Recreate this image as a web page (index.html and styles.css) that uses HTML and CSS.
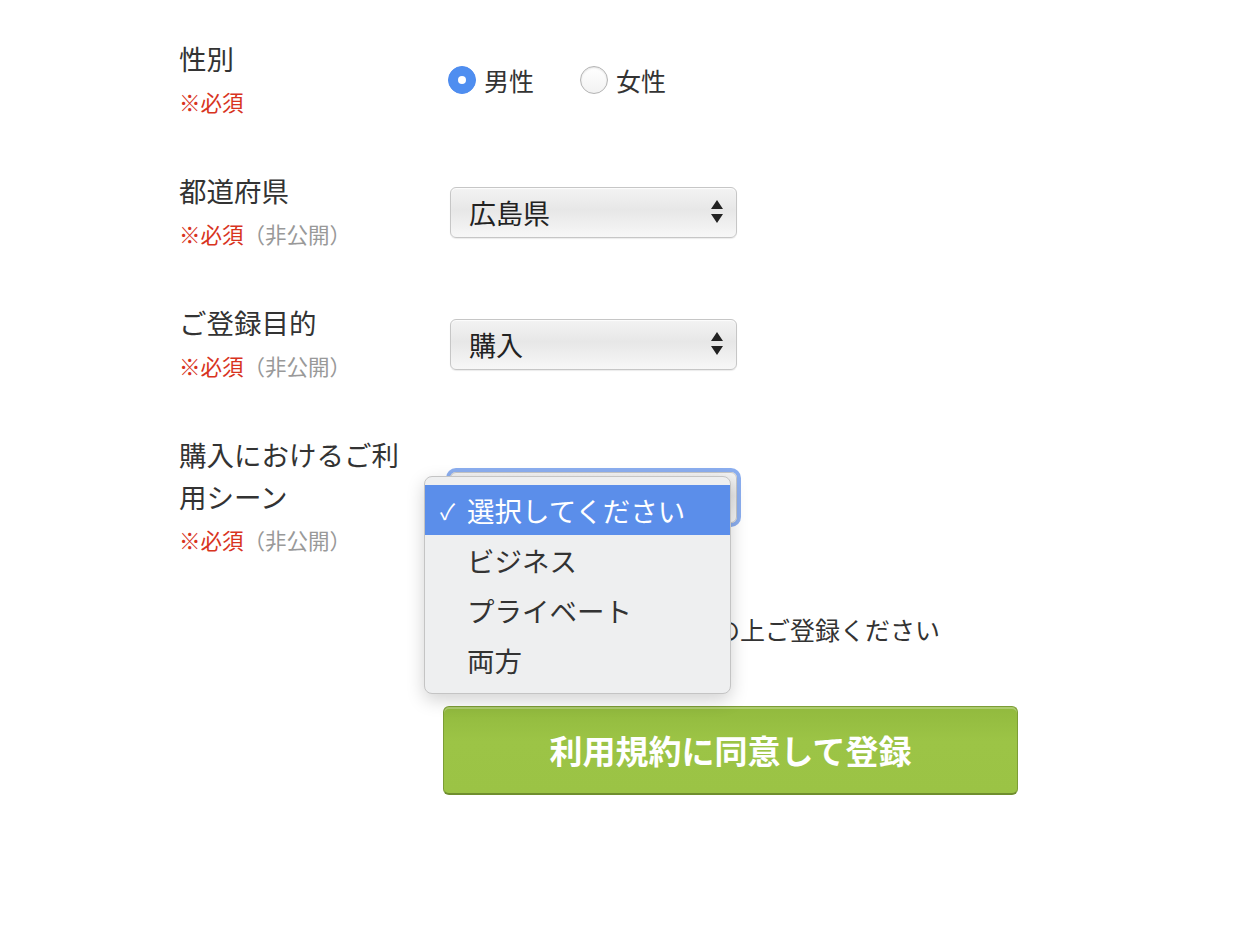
FILE: index.html
```html
<!DOCTYPE html>
<html>
<head>
    <meta charset="utf-8">
    <title>会員登録</title>
    <link rel="stylesheet" href="styles.css">
</head>
<body>
    <div class="form">

        <div class="row">
            <div class="label">
                <div class="title">性別</div>
                <div class="note"><span class="req">※必須</span></div>
            </div>
            <div class="field">
                <div class="radios">
                    <label class="radio"><span class="dot on"></span>男性</label>
                    <label class="radio"><span class="dot"></span>女性</label>
                </div>
            </div>
        </div>

        <div class="row">
            <div class="label">
                <div class="title">都道府県</div>
                <div class="note"><span class="req">※必須</span><span class="private">（非公開）</span></div>
            </div>
            <div class="field">
                <div class="select">
                    <span>広島県</span>
                    <svg class="arrows" width="12" height="26" viewBox="0 0 12 26"><path d="M6 1 L12 10 L0 10 Z M0 15 L12 15 L6 24 Z" fill="#222"/></svg>
                </div>
            </div>
        </div>

        <div class="row">
            <div class="label">
                <div class="title">ご登録目的</div>
                <div class="note"><span class="req">※必須</span><span class="private">（非公開）</span></div>
            </div>
            <div class="field">
                <div class="select">
                    <span>購入</span>
                    <svg class="arrows" width="12" height="26" viewBox="0 0 12 26"><path d="M6 1 L12 10 L0 10 Z M0 15 L12 15 L6 24 Z" fill="#222"/></svg>
                </div>
            </div>
        </div>

        <div class="row row-tall">
            <div class="label">
                <div class="title narrow">購入におけるご利用シーン</div>
                <div class="note"><span class="req">※必須</span><span class="private">（非公開）</span></div>
            </div>
            <div class="field">
                <div class="select focused">
                    <span>選択してください</span>
                </div>
                <!-- open option list -->
                <ul class="menu">
                    <li class="active"><span class="check">✓</span>選択してください</li>
                    <li>ビジネス</li>
                    <li>プライベート</li>
                    <li>両方</li>
                </ul>
            </div>
        </div>

        <div class="agree">
            <p>利用規約をご確認の上ご登録ください</p>
            <button class="submit">利用規約に同意して登録</button>
        </div>

    </div>
</body>
</html>
```

FILE: styles.css
```css
body {
    margin: 0;
    background: #fff;
    font-family: "Noto Sans CJK JP", "Noto Sans", sans-serif;
    color: #333;
}

.form {
    padding: 37px 0 0 179px;
}

.row {
    display: flex;
    align-items: center;
    margin-bottom: 44px;
}

.label {
    width: 264px;
    flex-shrink: 0;
}

.title {
    font-size: 27.5px;
    line-height: 42px;
}

.title.narrow {
    width: 232px;
}

.note {
    font-size: 21.5px;
    line-height: 46px;
}

.req {
    color: #d8341e;
}

.private {
    color: #999;
}

.field {
    position: relative;
    margin-top: -2px;
}

/* radio buttons */
.radios {
    display: flex;
    gap: 46px;
    margin-left: 5px;
}

.radio {
    display: flex;
    align-items: center;
    gap: 8px;
    font-size: 25px;
}

.dot {
    width: 26px;
    height: 26px;
    border-radius: 50%;
    border: 1px solid #b4b4b4;
    background: linear-gradient(#fff, #f2f2f2);
    box-shadow: inset 0 1px 2px rgba(0, 0, 0, 0.12);
    position: relative;
}

.dot.on {
    border-color: #4d8bef;
    background: #4f8ef0;
    box-shadow: none;
}

.dot.on::after {
    content: "";
    position: absolute;
    left: 9px;
    top: 9px;
    width: 8px;
    height: 8px;
    border-radius: 50%;
    background: #fff;
}

/* select look */
.select {
    margin-left: 7px;
    width: 287px;
    height: 51px;
    box-sizing: border-box;
    border: 1px solid #c6c6c6;
    border-radius: 6px;
    background: linear-gradient(#f3f3f3, #e7e7e7 45%, #f7f7f7);
    box-shadow: inset 0 1px 1px rgba(255, 255, 255, 0.8), 0 1px 1px rgba(0, 0, 0, 0.08);
    display: flex;
    align-items: center;
    justify-content: space-between;
    padding: 0 13px 0 18px;
    font-size: 27px;
    font-weight: 400;
    color: #222;
}

.select.focused {
    box-shadow: 0 0 0 4px rgba(90, 140, 232, 0.7);
}

/* open dropdown */
.menu {
    position: absolute;
    left: -19px;
    top: 4px;
    width: 307px;
    margin: 0;
    padding: 8px 0;
    list-style: none;
    background: #eeeff0;
    border: 1px solid #c4c4c4;
    border-radius: 8px;
    box-shadow: 0 6px 18px rgba(0, 0, 0, 0.18);
    box-sizing: border-box;
}

.menu li {
    height: 50px;
    line-height: 50px;
    padding-left: 42px;
    font-size: 27.5px;
    color: #333;
    position: relative;
}

.menu li.active {
    background: #5b8eea;
    color: #fff;
}

.check {
    position: absolute;
    left: 15px;
    font-size: 22px;
}

/* agree + submit */
.agree {
    width: 575px;
    margin-left: 264px;
    margin-top: 48px;
    text-align: center;
}

.agree p {
    margin: 0 0 59px;
    font-size: 25px;
    line-height: 36px;
    padding-right: 6px;
}

.submit {
    width: 575px;
    height: 89px;
    border: 1px solid #7c9d36;
    border-bottom: 2px solid #6f8e2e;
    border-radius: 6px;
    background: linear-gradient(#92ba3e, #9cc446 40%, #9bc345);
    box-shadow: inset 0 2px 0 rgba(255, 255, 255, 0.25);
    color: #fff;
    font-family: "Noto Sans CJK JP", sans-serif;
    font-size: 33px;
    font-weight: 700;
    cursor: pointer;
}
```
